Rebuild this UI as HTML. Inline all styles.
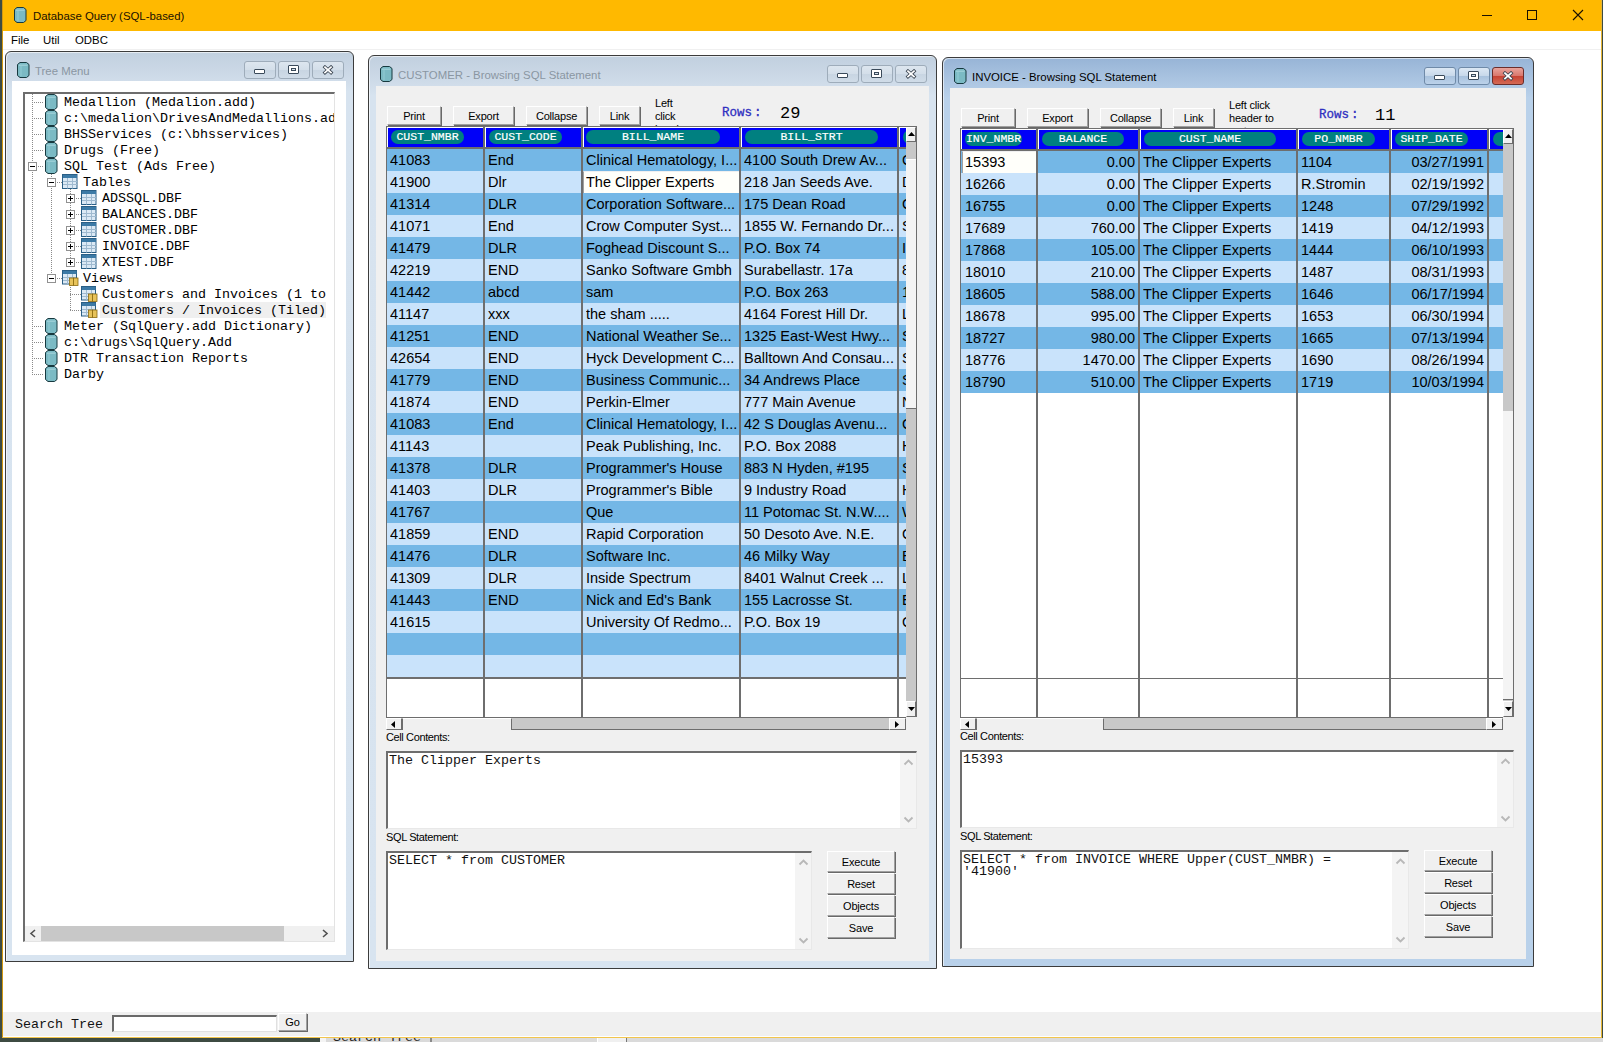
<!DOCTYPE html><html><head><meta charset="utf-8"><style>
*{margin:0;padding:0;box-sizing:border-box}
html,body{width:1603px;height:1042px;overflow:hidden;background:#3d4b42;position:relative;font-family:"Liberation Sans",sans-serif}
div,svg{position:absolute}
.t{white-space:pre;line-height:16px}
.m{font-family:"Liberation Mono",monospace;white-space:pre}
.btn{background:#f0f0f0;border-top:1px solid #fff;border-left:1px solid #fff;border-right:1px solid #a0a0a0;border-bottom:1px solid #a0a0a0;box-shadow:1px 1px 0 #696969;font-size:11px;letter-spacing:-0.2px;text-align:center;line-height:17px;color:#000}
.cap{border:1px solid #8d9cab;border-radius:3px;background:linear-gradient(#dfe8f1,#cfdbe7 50%,#c3d1df 51%,#cbd8e5)}
.g{font-size:14.5px;line-height:22px;color:#000;white-space:pre;overflow:hidden}
.pill{background:#008080;border-radius:7px;color:#fff;font-family:"Liberation Mono",monospace;font-size:11.5px;line-height:14px;-webkit-text-stroke:0.2px #fff;text-align:center;white-space:pre}
</style></head><body>
<div style="left:320px;top:1038px;width:1283px;height:4px;background:#dadada"></div>
<div style="left:320px;top:1038px;width:6px;height:4px;background:#f4f4f4"></div>
<div class="m" style="left:333px;top:1030px;font-size:13.33px;color:#222;line-height:16px">Search Tree</div>
<div style="left:430px;top:1038px;width:2px;height:4px;background:#8a8a8a"></div>
<div style="left:597px;top:1038px;width:30px;height:4px;background:#f0f0f0;border-left:1px solid #fff;border-right:1px solid #777"></div>
<div style="left:2px;top:0px;width:1600px;height:1038px;background:#fff;border-left:1px solid #d29812;border-right:1px solid #e6b534;border-bottom:1px solid #f2c54c"></div>
<div style="left:3px;top:0px;width:1598px;height:31px;background:#ffb900"></div>
<svg style="left:14px;top:7px" width="13" height="16" viewBox="0 0 13 16"><path d="M3 .5 H9.5 L12 2.5 V13.5 L9.5 15.5 H3 L.5 13.5 V2.5 Z" fill="#7bbac4" stroke="#17393f" stroke-width="1"/><path d="M2 3.2 H10.5" stroke="#a9d6dc" stroke-width="1"/><path d="M4 4 V14" stroke="#8fcad2" stroke-width="1.2"/></svg>
<div class="t" style="left:33px;top:8px;font-size:11.4px;color:#1a1000">Database Query (SQL-based)</div>
<div style="left:1482px;top:15px;width:10px;height:1px;background:#1a1000"></div>
<div style="left:1527px;top:10px;width:10px;height:10px;border:1px solid #1a1000"></div>
<svg style="left:1572px;top:9px" width="12" height="12" viewBox="0 0 12 12"><path d="M1 1L11 11M11 1L1 11" stroke="#1a1000" stroke-width="1.1"/></svg>
<div style="left:3px;top:31px;width:1598px;height:18px;background:#fff"></div>
<div class="t" style="left:11px;top:32px;font-size:11.4px;color:#000">File</div>
<div class="t" style="left:43px;top:32px;font-size:11.4px;color:#000">Util</div>
<div class="t" style="left:75px;top:32px;font-size:11.4px;color:#000">ODBC</div>
<div style="left:3px;top:49px;width:1598px;height:1px;background:#f0f0f0"></div>
<div style="left:3px;top:1012px;width:1598px;height:24px;background:#f0f0f0"></div>
<div class="m" style="left:15px;top:1017px;font-size:13.33px;color:#111;line-height:16px">Search Tree</div>
<div style="left:112px;top:1015px;width:165px;height:17px;background:#fff;border-top:2px solid #6a6a6a;border-left:2px solid #6a6a6a;border-bottom:1px solid #e0e0e0;border-right:1px solid #e0e0e0"></div>
<div class="btn" style="left:278px;top:1013px;width:29px;height:18px;">Go</div>
<div style="left:5px;top:51px;width:349px;height:911px;border:1px solid #3c3c3c;border-radius:6px 6px 0 0;background:linear-gradient(#c1d0df 0px,#cbd8e6 20px,#d7e3ef 40px,#d8e4f0);box-shadow:inset 1px 1px 0 rgba(255,255,255,.6)"></div><div style="left:12px;top:81px;width:334px;height:874px;background:#fff"></div><svg style="left:17px;top:62px" width="13" height="16" viewBox="0 0 13 16"><path d="M3 .5 H9.5 L12 2.5 V13.5 L9.5 15.5 H3 L.5 13.5 V2.5 Z" fill="#7bbac4" stroke="#17393f" stroke-width="1"/><path d="M2 3.2 H10.5" stroke="#a9d6dc" stroke-width="1"/><path d="M4 4 V14" stroke="#8fcad2" stroke-width="1.2"/></svg><div class="t" style="left:35px;top:63px;font-size:11.4px;color:#8a96a2">Tree Menu</div>
<div style="left:244px;top:61px;width:32px;height:18px;border:1px solid #9eacba;border-radius:3px;background:linear-gradient(#dde6ef,#d3dee9 50%,#c8d5e2 51%,#d0dce8)"><div style="left:9px;top:7px;width:11px;height:5px;background:#fff;border:1px solid #3a4a5a;border-radius:1px"></div></div><div style="left:278px;top:61px;width:32px;height:18px;border:1px solid #9eacba;border-radius:3px;background:linear-gradient(#dde6ef,#d3dee9 50%,#c8d5e2 51%,#d0dce8)"><div style="left:9px;top:3px;width:11px;height:9px;background:#fff;border:1px solid #3a4a5a;border-radius:1px"><div style="left:2px;top:2px;width:5px;height:3px;border:1px solid #3a4a5a;background:#d8e2ec"></div></div></div><div style="left:312px;top:61px;width:32px;height:18px;border:1px solid #9eacba;border-radius:3px;background:linear-gradient(#dde6ef,#d3dee9 50%,#c8d5e2 51%,#d0dce8)"><svg style="left:9px;top:3px" width="12" height="10" viewBox="0 0 12 10"><path d="M3 2.2 L9 7.6 M9 2.2 L3 7.6" stroke="#3a4450" stroke-width="3.4" stroke-linecap="square"/><path d="M3 2.2 L9 7.6 M9 2.2 L3 7.6" stroke="#fff" stroke-width="1.8" stroke-linecap="square"/></svg></div>
<div style="left:23px;top:92px;width:312px;height:850px;background:#fff;border-top:2px solid #6d6d6d;border-left:2px solid #6d6d6d;border-right:1px solid #e3e3e3;border-bottom:1px solid #e3e3e3"></div>
<div style="left:25px;top:94px;width:309px;height:832px;overflow:hidden"><div style="left:7px;top:0px;width:1px;height:280px;background:repeating-linear-gradient(#8a8a8a 0 1px,transparent 1px 2px)"></div><div style="left:26px;top:80px;width:1px;height:104px;background:repeating-linear-gradient(#8a8a8a 0 1px,transparent 1px 2px)"></div><div style="left:45px;top:95px;width:1px;height:73px;background:repeating-linear-gradient(#8a8a8a 0 1px,transparent 1px 2px)"></div><div style="left:45px;top:191px;width:1px;height:25px;background:repeating-linear-gradient(#8a8a8a 0 1px,transparent 1px 2px)"></div><div style="left:7px;top:8px;width:12px;height:1px;background:repeating-linear-gradient(90deg,#8a8a8a 0 1px,transparent 1px 2px)"></div><svg style="left:20px;top:0px" width="13" height="16" viewBox="0 0 13 16"><path d="M3 .5 H9.5 L12 2.5 V13.5 L9.5 15.5 H3 L.5 13.5 V2.5 Z" fill="#7bbac4" stroke="#17393f" stroke-width="1"/><path d="M2 3.2 H10.5" stroke="#a9d6dc" stroke-width="1"/><path d="M4 4 V14" stroke="#8fcad2" stroke-width="1.2"/></svg><div class="m" style="left:39px;top:1px;font-size:13.33px;color:#000;line-height:16px">Medallion (Medalion.add)</div><div style="left:7px;top:24px;width:12px;height:1px;background:repeating-linear-gradient(90deg,#8a8a8a 0 1px,transparent 1px 2px)"></div><svg style="left:20px;top:16px" width="13" height="16" viewBox="0 0 13 16"><path d="M3 .5 H9.5 L12 2.5 V13.5 L9.5 15.5 H3 L.5 13.5 V2.5 Z" fill="#7bbac4" stroke="#17393f" stroke-width="1"/><path d="M2 3.2 H10.5" stroke="#a9d6dc" stroke-width="1"/><path d="M4 4 V14" stroke="#8fcad2" stroke-width="1.2"/></svg><div class="m" style="left:39px;top:17px;font-size:13.33px;color:#000;line-height:16px">c:\medalion\DrivesAndMedallions.add</div><div style="left:7px;top:40px;width:12px;height:1px;background:repeating-linear-gradient(90deg,#8a8a8a 0 1px,transparent 1px 2px)"></div><svg style="left:20px;top:32px" width="13" height="16" viewBox="0 0 13 16"><path d="M3 .5 H9.5 L12 2.5 V13.5 L9.5 15.5 H3 L.5 13.5 V2.5 Z" fill="#7bbac4" stroke="#17393f" stroke-width="1"/><path d="M2 3.2 H10.5" stroke="#a9d6dc" stroke-width="1"/><path d="M4 4 V14" stroke="#8fcad2" stroke-width="1.2"/></svg><div class="m" style="left:39px;top:33px;font-size:13.33px;color:#000;line-height:16px">BHSServices (c:\bhsservices)</div><div style="left:7px;top:56px;width:12px;height:1px;background:repeating-linear-gradient(90deg,#8a8a8a 0 1px,transparent 1px 2px)"></div><svg style="left:20px;top:48px" width="13" height="16" viewBox="0 0 13 16"><path d="M3 .5 H9.5 L12 2.5 V13.5 L9.5 15.5 H3 L.5 13.5 V2.5 Z" fill="#7bbac4" stroke="#17393f" stroke-width="1"/><path d="M2 3.2 H10.5" stroke="#a9d6dc" stroke-width="1"/><path d="M4 4 V14" stroke="#8fcad2" stroke-width="1.2"/></svg><div class="m" style="left:39px;top:49px;font-size:13.33px;color:#000;line-height:16px">Drugs (Free)</div><div style="left:7px;top:72px;width:12px;height:1px;background:repeating-linear-gradient(90deg,#8a8a8a 0 1px,transparent 1px 2px)"></div><svg style="left:20px;top:64px" width="13" height="16" viewBox="0 0 13 16"><path d="M3 .5 H9.5 L12 2.5 V13.5 L9.5 15.5 H3 L.5 13.5 V2.5 Z" fill="#7bbac4" stroke="#17393f" stroke-width="1"/><path d="M2 3.2 H10.5" stroke="#a9d6dc" stroke-width="1"/><path d="M4 4 V14" stroke="#8fcad2" stroke-width="1.2"/></svg><div style="left:3px;top:68px;width:9px;height:9px;border:1px solid #919191;background:#fff"><div style="left:1px;top:3px;width:5px;height:1px;background:#000"></div></div><div class="m" style="left:39px;top:65px;font-size:13.33px;color:#000;line-height:16px">SQL Test (Ads Free)</div><div style="left:26px;top:88px;width:12px;height:1px;background:repeating-linear-gradient(90deg,#8a8a8a 0 1px,transparent 1px 2px)"></div><svg style="left:37px;top:80px" width="16" height="15" viewBox="0 0 16 15"><rect x=".5" y=".5" width="14.5" height="14" fill="#dbe9f5" stroke="#2a5f86"/><rect x="1" y="1" width="14" height="3" fill="#3c7aa6"/><path d="M1 7.5H15M1 10.5H15M5.5 4V14.5M10.5 4V14.5" stroke="#9fbad0" stroke-width="1"/></svg><div style="left:22px;top:84px;width:9px;height:9px;border:1px solid #919191;background:#fff"><div style="left:1px;top:3px;width:5px;height:1px;background:#000"></div></div><div class="m" style="left:58px;top:81px;font-size:13.33px;color:#000;line-height:16px">Tables</div><div style="left:45px;top:104px;width:12px;height:1px;background:repeating-linear-gradient(90deg,#8a8a8a 0 1px,transparent 1px 2px)"></div><svg style="left:56px;top:96px" width="16" height="15" viewBox="0 0 16 15"><rect x=".5" y=".5" width="14.5" height="14" fill="#dbe9f5" stroke="#2a5f86"/><rect x="1" y="1" width="14" height="3" fill="#3c7aa6"/><path d="M1 7.5H15M1 10.5H15M5.5 4V14.5M10.5 4V14.5" stroke="#9fbad0" stroke-width="1"/></svg><div style="left:41px;top:100px;width:9px;height:9px;border:1px solid #919191;background:#fff"><div style="left:1px;top:3px;width:5px;height:1px;background:#000"></div><div style="left:3px;top:1px;width:1px;height:5px;background:#000"></div></div><div class="m" style="left:77px;top:97px;font-size:13.33px;color:#000;line-height:16px">ADSSQL.DBF</div><div style="left:45px;top:120px;width:12px;height:1px;background:repeating-linear-gradient(90deg,#8a8a8a 0 1px,transparent 1px 2px)"></div><svg style="left:56px;top:112px" width="16" height="15" viewBox="0 0 16 15"><rect x=".5" y=".5" width="14.5" height="14" fill="#dbe9f5" stroke="#2a5f86"/><rect x="1" y="1" width="14" height="3" fill="#3c7aa6"/><path d="M1 7.5H15M1 10.5H15M5.5 4V14.5M10.5 4V14.5" stroke="#9fbad0" stroke-width="1"/></svg><div style="left:41px;top:116px;width:9px;height:9px;border:1px solid #919191;background:#fff"><div style="left:1px;top:3px;width:5px;height:1px;background:#000"></div><div style="left:3px;top:1px;width:1px;height:5px;background:#000"></div></div><div class="m" style="left:77px;top:113px;font-size:13.33px;color:#000;line-height:16px">BALANCES.DBF</div><div style="left:45px;top:136px;width:12px;height:1px;background:repeating-linear-gradient(90deg,#8a8a8a 0 1px,transparent 1px 2px)"></div><svg style="left:56px;top:128px" width="16" height="15" viewBox="0 0 16 15"><rect x=".5" y=".5" width="14.5" height="14" fill="#dbe9f5" stroke="#2a5f86"/><rect x="1" y="1" width="14" height="3" fill="#3c7aa6"/><path d="M1 7.5H15M1 10.5H15M5.5 4V14.5M10.5 4V14.5" stroke="#9fbad0" stroke-width="1"/></svg><div style="left:41px;top:132px;width:9px;height:9px;border:1px solid #919191;background:#fff"><div style="left:1px;top:3px;width:5px;height:1px;background:#000"></div><div style="left:3px;top:1px;width:1px;height:5px;background:#000"></div></div><div class="m" style="left:77px;top:129px;font-size:13.33px;color:#000;line-height:16px">CUSTOMER.DBF</div><div style="left:45px;top:152px;width:12px;height:1px;background:repeating-linear-gradient(90deg,#8a8a8a 0 1px,transparent 1px 2px)"></div><svg style="left:56px;top:144px" width="16" height="15" viewBox="0 0 16 15"><rect x=".5" y=".5" width="14.5" height="14" fill="#dbe9f5" stroke="#2a5f86"/><rect x="1" y="1" width="14" height="3" fill="#3c7aa6"/><path d="M1 7.5H15M1 10.5H15M5.5 4V14.5M10.5 4V14.5" stroke="#9fbad0" stroke-width="1"/></svg><div style="left:41px;top:148px;width:9px;height:9px;border:1px solid #919191;background:#fff"><div style="left:1px;top:3px;width:5px;height:1px;background:#000"></div><div style="left:3px;top:1px;width:1px;height:5px;background:#000"></div></div><div class="m" style="left:77px;top:145px;font-size:13.33px;color:#000;line-height:16px">INVOICE.DBF</div><div style="left:45px;top:168px;width:12px;height:1px;background:repeating-linear-gradient(90deg,#8a8a8a 0 1px,transparent 1px 2px)"></div><svg style="left:56px;top:160px" width="16" height="15" viewBox="0 0 16 15"><rect x=".5" y=".5" width="14.5" height="14" fill="#dbe9f5" stroke="#2a5f86"/><rect x="1" y="1" width="14" height="3" fill="#3c7aa6"/><path d="M1 7.5H15M1 10.5H15M5.5 4V14.5M10.5 4V14.5" stroke="#9fbad0" stroke-width="1"/></svg><div style="left:41px;top:164px;width:9px;height:9px;border:1px solid #919191;background:#fff"><div style="left:1px;top:3px;width:5px;height:1px;background:#000"></div><div style="left:3px;top:1px;width:1px;height:5px;background:#000"></div></div><div class="m" style="left:77px;top:161px;font-size:13.33px;color:#000;line-height:16px">XTEST.DBF</div><div style="left:26px;top:184px;width:12px;height:1px;background:repeating-linear-gradient(90deg,#8a8a8a 0 1px,transparent 1px 2px)"></div><svg style="left:37px;top:176px" width="17" height="16" viewBox="0 0 17 16"><rect x=".5" y=".5" width="14" height="13.5" fill="#dbe9f5" stroke="#2a5f86"/><rect x="1" y="1" width="13.5" height="3" fill="#3c7aa6"/><path d="M1 7.5H14M1 10.5H14M5.5 4V14M10.5 4V14" stroke="#9fbad0" stroke-width="1"/><rect x="7.5" y="8" width="4" height="7.5" fill="#e8c35a" stroke="#8a6a10" stroke-width=".8"/><rect x="11.5" y="8" width="4.5" height="7.5" fill="#e8c35a" stroke="#8a6a10" stroke-width=".8"/></svg><div style="left:22px;top:180px;width:9px;height:9px;border:1px solid #919191;background:#fff"><div style="left:1px;top:3px;width:5px;height:1px;background:#000"></div></div><div class="m" style="left:58px;top:177px;font-size:13.33px;color:#000;line-height:16px">Views</div><div style="left:45px;top:200px;width:12px;height:1px;background:repeating-linear-gradient(90deg,#8a8a8a 0 1px,transparent 1px 2px)"></div><svg style="left:56px;top:192px" width="17" height="16" viewBox="0 0 17 16"><rect x=".5" y=".5" width="14" height="13.5" fill="#dbe9f5" stroke="#2a5f86"/><rect x="1" y="1" width="13.5" height="3" fill="#3c7aa6"/><path d="M1 7.5H14M1 10.5H14M5.5 4V14M10.5 4V14" stroke="#9fbad0" stroke-width="1"/><rect x="7.5" y="8" width="4" height="7.5" fill="#e8c35a" stroke="#8a6a10" stroke-width=".8"/><rect x="11.5" y="8" width="4.5" height="7.5" fill="#e8c35a" stroke="#8a6a10" stroke-width=".8"/></svg><div class="m" style="left:77px;top:193px;font-size:13.33px;color:#000;line-height:16px">Customers and Invoices (1 to</div><div style="left:45px;top:216px;width:12px;height:1px;background:repeating-linear-gradient(90deg,#8a8a8a 0 1px,transparent 1px 2px)"></div><svg style="left:56px;top:208px" width="17" height="16" viewBox="0 0 17 16"><rect x=".5" y=".5" width="14" height="13.5" fill="#dbe9f5" stroke="#2a5f86"/><rect x="1" y="1" width="13.5" height="3" fill="#3c7aa6"/><path d="M1 7.5H14M1 10.5H14M5.5 4V14M10.5 4V14" stroke="#9fbad0" stroke-width="1"/><rect x="7.5" y="8" width="4" height="7.5" fill="#e8c35a" stroke="#8a6a10" stroke-width=".8"/><rect x="11.5" y="8" width="4.5" height="7.5" fill="#e8c35a" stroke="#8a6a10" stroke-width=".8"/></svg><div style="left:75px;top:208px;width:226px;height:16px;background:#efefef"></div><div class="m" style="left:77px;top:209px;font-size:13.33px;color:#000;line-height:16px">Customers / Invoices (Tiled)</div><div style="left:7px;top:232px;width:12px;height:1px;background:repeating-linear-gradient(90deg,#8a8a8a 0 1px,transparent 1px 2px)"></div><svg style="left:20px;top:224px" width="13" height="16" viewBox="0 0 13 16"><path d="M3 .5 H9.5 L12 2.5 V13.5 L9.5 15.5 H3 L.5 13.5 V2.5 Z" fill="#7bbac4" stroke="#17393f" stroke-width="1"/><path d="M2 3.2 H10.5" stroke="#a9d6dc" stroke-width="1"/><path d="M4 4 V14" stroke="#8fcad2" stroke-width="1.2"/></svg><div class="m" style="left:39px;top:225px;font-size:13.33px;color:#000;line-height:16px">Meter (SqlQuery.add Dictionary)</div><div style="left:7px;top:248px;width:12px;height:1px;background:repeating-linear-gradient(90deg,#8a8a8a 0 1px,transparent 1px 2px)"></div><svg style="left:20px;top:240px" width="13" height="16" viewBox="0 0 13 16"><path d="M3 .5 H9.5 L12 2.5 V13.5 L9.5 15.5 H3 L.5 13.5 V2.5 Z" fill="#7bbac4" stroke="#17393f" stroke-width="1"/><path d="M2 3.2 H10.5" stroke="#a9d6dc" stroke-width="1"/><path d="M4 4 V14" stroke="#8fcad2" stroke-width="1.2"/></svg><div class="m" style="left:39px;top:241px;font-size:13.33px;color:#000;line-height:16px">c:\drugs\SqlQuery.Add</div><div style="left:7px;top:264px;width:12px;height:1px;background:repeating-linear-gradient(90deg,#8a8a8a 0 1px,transparent 1px 2px)"></div><svg style="left:20px;top:256px" width="13" height="16" viewBox="0 0 13 16"><path d="M3 .5 H9.5 L12 2.5 V13.5 L9.5 15.5 H3 L.5 13.5 V2.5 Z" fill="#7bbac4" stroke="#17393f" stroke-width="1"/><path d="M2 3.2 H10.5" stroke="#a9d6dc" stroke-width="1"/><path d="M4 4 V14" stroke="#8fcad2" stroke-width="1.2"/></svg><div class="m" style="left:39px;top:257px;font-size:13.33px;color:#000;line-height:16px">DTR Transaction Reports</div><div style="left:7px;top:280px;width:12px;height:1px;background:repeating-linear-gradient(90deg,#8a8a8a 0 1px,transparent 1px 2px)"></div><svg style="left:20px;top:272px" width="13" height="16" viewBox="0 0 13 16"><path d="M3 .5 H9.5 L12 2.5 V13.5 L9.5 15.5 H3 L.5 13.5 V2.5 Z" fill="#7bbac4" stroke="#17393f" stroke-width="1"/><path d="M2 3.2 H10.5" stroke="#a9d6dc" stroke-width="1"/><path d="M4 4 V14" stroke="#8fcad2" stroke-width="1.2"/></svg><div class="m" style="left:39px;top:273px;font-size:13.33px;color:#000;line-height:16px">Darby</div></div>
<div style="left:25px;top:926px;width:309px;height:15px;background:#f0f0f0"></div>
<div style="left:41px;top:926px;width:243px;height:15px;background:#c8c8c8"></div>
<svg style="left:29px;top:929px" width="8" height="9" viewBox="0 0 8 9"><path d="M6 1L2 4.5L6 8" stroke="#505050" stroke-width="1.6" fill="none"/></svg>
<svg style="left:321px;top:929px" width="8" height="9" viewBox="0 0 8 9"><path d="M2 1L6 4.5L2 8" stroke="#505050" stroke-width="1.6" fill="none"/></svg>
<div style="left:368px;top:55px;width:569px;height:914px;border:1px solid #3c3c3c;border-radius:6px 6px 0 0;background:linear-gradient(#c1d0df 0px,#cbd8e6 20px,#d7e3ef 40px,#d8e4f0);box-shadow:inset 1px 1px 0 rgba(255,255,255,.6)"></div><div style="left:376px;top:86px;width:553px;height:875px;background:#f0f0f0"></div><svg style="left:380px;top:66px" width="13" height="16" viewBox="0 0 13 16"><path d="M3 .5 H9.5 L12 2.5 V13.5 L9.5 15.5 H3 L.5 13.5 V2.5 Z" fill="#7bbac4" stroke="#17393f" stroke-width="1"/><path d="M2 3.2 H10.5" stroke="#a9d6dc" stroke-width="1"/><path d="M4 4 V14" stroke="#8fcad2" stroke-width="1.2"/></svg><div class="t" style="left:398px;top:67px;font-size:11.4px;color:#8a96a2">CUSTOMER - Browsing SQL Statement</div><div style="left:827px;top:65px;width:32px;height:18px;border:1px solid #9eacba;border-radius:3px;background:linear-gradient(#dde6ef,#d3dee9 50%,#c8d5e2 51%,#d0dce8)"><div style="left:9px;top:7px;width:11px;height:5px;background:#fff;border:1px solid #3a4a5a;border-radius:1px"></div></div><div style="left:861px;top:65px;width:32px;height:18px;border:1px solid #9eacba;border-radius:3px;background:linear-gradient(#dde6ef,#d3dee9 50%,#c8d5e2 51%,#d0dce8)"><div style="left:9px;top:3px;width:11px;height:9px;background:#fff;border:1px solid #3a4a5a;border-radius:1px"><div style="left:2px;top:2px;width:5px;height:3px;border:1px solid #3a4a5a;background:#d8e2ec"></div></div></div><div style="left:895px;top:65px;width:32px;height:18px;border:1px solid #9eacba;border-radius:3px;background:linear-gradient(#dde6ef,#d3dee9 50%,#c8d5e2 51%,#d0dce8)"><svg style="left:9px;top:3px" width="12" height="10" viewBox="0 0 12 10"><path d="M3 2.2 L9 7.6 M9 2.2 L3 7.6" stroke="#3a4450" stroke-width="3.4" stroke-linecap="square"/><path d="M3 2.2 L9 7.6 M9 2.2 L3 7.6" stroke="#fff" stroke-width="1.8" stroke-linecap="square"/></svg></div><div class="btn" style="left:387px;top:106px;width:54px;height:19px;line-height:18px">Print</div><div class="btn" style="left:453px;top:106px;width:61px;height:19px;line-height:18px">Export</div><div class="btn" style="left:526px;top:106px;width:61px;height:19px;line-height:18px">Collapse</div><div class="btn" style="left:599px;top:106px;width:41px;height:19px;line-height:18px">Link</div><div style="left:655px;top:96px;width:50px;height:30px;overflow:hidden"><div class="t" style="left:0px;top:1px;font-size:11px;line-height:13px;color:#000;letter-spacing:-0.2px">Left</div><div class="t" style="left:0px;top:14px;font-size:11px;line-height:13px;color:#000;letter-spacing:-0.2px">click</div><div class="t" style="left:0px;top:27px;font-size:11px;line-height:13px;color:#000;letter-spacing:-0.2px">header</div><div class="t" style="left:0px;top:40px;font-size:11px;line-height:13px;color:#000;letter-spacing:-0.2px">to sort</div></div><div class="m" style="left:722px;top:105px;font-size:12.5px;line-height:16px;color:#2f2fc0;-webkit-text-stroke:0.3px #2f2fc0">Rows</div><div class="m" style="left:754px;top:105px;font-size:12.5px;line-height:16px;color:#2f2fc0;-webkit-text-stroke:0.3px #2f2fc0">:</div><div class="m" style="left:780px;top:104px;font-size:17px;line-height:20px;color:#000">29</div><div style="left:386px;top:126px;width:520px;height:591px;overflow:hidden;background:#fff"><div style="left:0px;top:0px;width:520px;height:1px;background:#6e6e6e"></div><div style="left:0px;top:0px;width:1px;height:591px;background:#6e6e6e"></div><div style="left:1px;top:1px;width:520px;height:20px;background:#0000f8;border-top:1px solid #fff;border-left:1px solid #fff"></div><div style="left:1px;top:21px;width:520px;height:2px;background:#6e6e6e"></div><div style="left:1px;top:23px;width:520px;height:22px;background:#74b7e6"></div><div style="left:1px;top:45px;width:520px;height:22px;background:#c9e3fb"></div><div style="left:1px;top:67px;width:520px;height:22px;background:#74b7e6"></div><div style="left:1px;top:89px;width:520px;height:22px;background:#c9e3fb"></div><div style="left:1px;top:111px;width:520px;height:22px;background:#74b7e6"></div><div style="left:1px;top:133px;width:520px;height:22px;background:#c9e3fb"></div><div style="left:1px;top:155px;width:520px;height:22px;background:#74b7e6"></div><div style="left:1px;top:177px;width:520px;height:22px;background:#c9e3fb"></div><div style="left:1px;top:199px;width:520px;height:22px;background:#74b7e6"></div><div style="left:1px;top:221px;width:520px;height:22px;background:#c9e3fb"></div><div style="left:1px;top:243px;width:520px;height:22px;background:#74b7e6"></div><div style="left:1px;top:265px;width:520px;height:22px;background:#c9e3fb"></div><div style="left:1px;top:287px;width:520px;height:22px;background:#74b7e6"></div><div style="left:1px;top:309px;width:520px;height:22px;background:#c9e3fb"></div><div style="left:1px;top:331px;width:520px;height:22px;background:#74b7e6"></div><div style="left:1px;top:353px;width:520px;height:22px;background:#c9e3fb"></div><div style="left:1px;top:375px;width:520px;height:22px;background:#74b7e6"></div><div style="left:1px;top:397px;width:520px;height:22px;background:#c9e3fb"></div><div style="left:1px;top:419px;width:520px;height:22px;background:#74b7e6"></div><div style="left:1px;top:441px;width:520px;height:22px;background:#c9e3fb"></div><div style="left:1px;top:463px;width:520px;height:22px;background:#74b7e6"></div><div style="left:1px;top:485px;width:520px;height:22px;background:#c9e3fb"></div><div style="left:1px;top:507px;width:520px;height:22px;background:#74b7e6"></div><div style="left:1px;top:529px;width:520px;height:22px;background:#c9e3fb"></div><div style="left:1px;top:551px;width:520px;height:2px;background:#6e6e6e"></div><div style="left:1px;top:552px;width:520px;height:1px;background:#6e6e6e"></div><div class="pill" style="left:5px;top:4px;width:73px;height:14px;">CUST_NMBR</div><div style="left:97px;top:0px;width:2px;height:591px;background:#6e6e6e"></div><div style="left:99px;top:1px;width:1px;height:20px;background:#fff"></div><div class="pill" style="left:103px;top:4px;width:73px;height:14px;">CUST_CODE</div><div style="left:195px;top:0px;width:2px;height:591px;background:#6e6e6e"></div><div style="left:197px;top:1px;width:1px;height:20px;background:#fff"></div><div class="pill" style="left:200px;top:4px;width:134px;height:14px;">BILL_NAME</div><div style="left:353px;top:0px;width:2px;height:591px;background:#6e6e6e"></div><div style="left:355px;top:1px;width:1px;height:20px;background:#fff"></div><div class="pill" style="left:359px;top:4px;width:133px;height:14px;">BILL_STRT</div><div style="left:511px;top:0px;width:2px;height:591px;background:#6e6e6e"></div><div style="left:513px;top:1px;width:1px;height:20px;background:#fff"></div><div class="pill" style="left:517px;top:4px;width:137px;height:14px;">BILL_CITY</div><div style="left:674px;top:0px;width:2px;height:591px;background:#6e6e6e"></div><div style="left:676px;top:1px;width:1px;height:20px;background:#fff"></div><div class="g" style="left:4px;top:23px;width:93px;height:22px">41083</div><div class="g" style="left:102px;top:23px;width:93px;height:22px">End</div><div class="g" style="left:200px;top:23px;width:153px;height:22px">Clinical Hematology, I...</div><div class="g" style="left:358px;top:23px;width:153px;height:22px">4100 South Drew Av...</div><div class="g" style="left:516px;top:23px;width:158px;height:22px">C</div><div class="g" style="left:4px;top:45px;width:93px;height:22px">41900</div><div class="g" style="left:102px;top:45px;width:93px;height:22px">Dlr</div><div style="left:197px;top:45px;width:156px;height:22px;background:#fffffa;border-top:1px solid #f0f0f0;border-left:1px solid #a0a0a0"></div><div class="g" style="left:200px;top:45px;width:153px;height:22px">The Clipper Experts</div><div class="g" style="left:358px;top:45px;width:153px;height:22px">218 Jan Seeds Ave.</div><div class="g" style="left:516px;top:45px;width:158px;height:22px">D</div><div class="g" style="left:4px;top:67px;width:93px;height:22px">41314</div><div class="g" style="left:102px;top:67px;width:93px;height:22px">DLR</div><div class="g" style="left:200px;top:67px;width:153px;height:22px">Corporation Software...</div><div class="g" style="left:358px;top:67px;width:153px;height:22px">175 Dean Road</div><div class="g" style="left:516px;top:67px;width:158px;height:22px">C</div><div class="g" style="left:4px;top:89px;width:93px;height:22px">41071</div><div class="g" style="left:102px;top:89px;width:93px;height:22px">End</div><div class="g" style="left:200px;top:89px;width:153px;height:22px">Crow Computer Syst...</div><div class="g" style="left:358px;top:89px;width:153px;height:22px">1855 W. Fernando Dr...</div><div class="g" style="left:516px;top:89px;width:158px;height:22px">S</div><div class="g" style="left:4px;top:111px;width:93px;height:22px">41479</div><div class="g" style="left:102px;top:111px;width:93px;height:22px">DLR</div><div class="g" style="left:200px;top:111px;width:153px;height:22px">Foghead Discount S...</div><div class="g" style="left:358px;top:111px;width:153px;height:22px">P.O. Box 74</div><div class="g" style="left:516px;top:111px;width:158px;height:22px">I</div><div class="g" style="left:4px;top:133px;width:93px;height:22px">42219</div><div class="g" style="left:102px;top:133px;width:93px;height:22px">END</div><div class="g" style="left:200px;top:133px;width:153px;height:22px">Sanko Software Gmbh</div><div class="g" style="left:358px;top:133px;width:153px;height:22px">Surabellastr. 17a</div><div class="g" style="left:516px;top:133px;width:158px;height:22px">8</div><div class="g" style="left:4px;top:155px;width:93px;height:22px">41442</div><div class="g" style="left:102px;top:155px;width:93px;height:22px">abcd</div><div class="g" style="left:200px;top:155px;width:153px;height:22px">sam</div><div class="g" style="left:358px;top:155px;width:153px;height:22px">P.O. Box 263</div><div class="g" style="left:516px;top:155px;width:158px;height:22px">1</div><div class="g" style="left:4px;top:177px;width:93px;height:22px">41147</div><div class="g" style="left:102px;top:177px;width:93px;height:22px">xxx</div><div class="g" style="left:200px;top:177px;width:153px;height:22px">the sham .....</div><div class="g" style="left:358px;top:177px;width:153px;height:22px">4164 Forest Hill Dr.</div><div class="g" style="left:516px;top:177px;width:158px;height:22px">L</div><div class="g" style="left:4px;top:199px;width:93px;height:22px">41251</div><div class="g" style="left:102px;top:199px;width:93px;height:22px">END</div><div class="g" style="left:200px;top:199px;width:153px;height:22px">National Weather Se...</div><div class="g" style="left:358px;top:199px;width:153px;height:22px">1325 East-West Hwy...</div><div class="g" style="left:516px;top:199px;width:158px;height:22px">S</div><div class="g" style="left:4px;top:221px;width:93px;height:22px">42654</div><div class="g" style="left:102px;top:221px;width:93px;height:22px">END</div><div class="g" style="left:200px;top:221px;width:153px;height:22px">Hyck Development C...</div><div class="g" style="left:358px;top:221px;width:153px;height:22px">Balltown And Consau...</div><div class="g" style="left:516px;top:221px;width:158px;height:22px">S</div><div class="g" style="left:4px;top:243px;width:93px;height:22px">41779</div><div class="g" style="left:102px;top:243px;width:93px;height:22px">END</div><div class="g" style="left:200px;top:243px;width:153px;height:22px">Business Communic...</div><div class="g" style="left:358px;top:243px;width:153px;height:22px">34 Andrews Place</div><div class="g" style="left:516px;top:243px;width:158px;height:22px">S</div><div class="g" style="left:4px;top:265px;width:93px;height:22px">41874</div><div class="g" style="left:102px;top:265px;width:93px;height:22px">END</div><div class="g" style="left:200px;top:265px;width:153px;height:22px">Perkin-Elmer</div><div class="g" style="left:358px;top:265px;width:153px;height:22px">777 Main Avenue</div><div class="g" style="left:516px;top:265px;width:158px;height:22px">N</div><div class="g" style="left:4px;top:287px;width:93px;height:22px">41083</div><div class="g" style="left:102px;top:287px;width:93px;height:22px">End</div><div class="g" style="left:200px;top:287px;width:153px;height:22px">Clinical Hematology, I...</div><div class="g" style="left:358px;top:287px;width:153px;height:22px">42 S Douglas Avenu...</div><div class="g" style="left:516px;top:287px;width:158px;height:22px">C</div><div class="g" style="left:4px;top:309px;width:93px;height:22px">41143</div><div class="g" style="left:200px;top:309px;width:153px;height:22px">Peak Publishing, Inc.</div><div class="g" style="left:358px;top:309px;width:153px;height:22px">P.O. Box 2088</div><div class="g" style="left:516px;top:309px;width:158px;height:22px">H</div><div class="g" style="left:4px;top:331px;width:93px;height:22px">41378</div><div class="g" style="left:102px;top:331px;width:93px;height:22px">DLR</div><div class="g" style="left:200px;top:331px;width:153px;height:22px">Programmer's House</div><div class="g" style="left:358px;top:331px;width:153px;height:22px">883 N Hyden, #195</div><div class="g" style="left:516px;top:331px;width:158px;height:22px">S</div><div class="g" style="left:4px;top:353px;width:93px;height:22px">41403</div><div class="g" style="left:102px;top:353px;width:93px;height:22px">DLR</div><div class="g" style="left:200px;top:353px;width:153px;height:22px">Programmer's Bible</div><div class="g" style="left:358px;top:353px;width:153px;height:22px">9 Industry Road</div><div class="g" style="left:516px;top:353px;width:158px;height:22px">H</div><div class="g" style="left:4px;top:375px;width:93px;height:22px">41767</div><div class="g" style="left:200px;top:375px;width:153px;height:22px">Que</div><div class="g" style="left:358px;top:375px;width:153px;height:22px">11 Potomac St. N.W....</div><div class="g" style="left:516px;top:375px;width:158px;height:22px">W</div><div class="g" style="left:4px;top:397px;width:93px;height:22px">41859</div><div class="g" style="left:102px;top:397px;width:93px;height:22px">END</div><div class="g" style="left:200px;top:397px;width:153px;height:22px">Rapid Corporation</div><div class="g" style="left:358px;top:397px;width:153px;height:22px">50 Desoto Ave. N.E.</div><div class="g" style="left:516px;top:397px;width:158px;height:22px">C</div><div class="g" style="left:4px;top:419px;width:93px;height:22px">41476</div><div class="g" style="left:102px;top:419px;width:93px;height:22px">DLR</div><div class="g" style="left:200px;top:419px;width:153px;height:22px">Software Inc.</div><div class="g" style="left:358px;top:419px;width:153px;height:22px">46 Milky Way</div><div class="g" style="left:516px;top:419px;width:158px;height:22px">B</div><div class="g" style="left:4px;top:441px;width:93px;height:22px">41309</div><div class="g" style="left:102px;top:441px;width:93px;height:22px">DLR</div><div class="g" style="left:200px;top:441px;width:153px;height:22px">Inside Spectrum</div><div class="g" style="left:358px;top:441px;width:153px;height:22px">8401 Walnut Creek ...</div><div class="g" style="left:516px;top:441px;width:158px;height:22px">L</div><div class="g" style="left:4px;top:463px;width:93px;height:22px">41443</div><div class="g" style="left:102px;top:463px;width:93px;height:22px">END</div><div class="g" style="left:200px;top:463px;width:153px;height:22px">Nick and Ed's Bank</div><div class="g" style="left:358px;top:463px;width:153px;height:22px">155 Lacrosse St.</div><div class="g" style="left:516px;top:463px;width:158px;height:22px">E</div><div class="g" style="left:4px;top:485px;width:93px;height:22px">41615</div><div class="g" style="left:200px;top:485px;width:153px;height:22px">University Of Redmo...</div><div class="g" style="left:358px;top:485px;width:153px;height:22px">P.O. Box 19</div><div class="g" style="left:516px;top:485px;width:158px;height:22px">C</div></div><div style="left:906px;top:126px;width:11px;height:591px;background:#c8c8c8;border-right:1px solid #6d6d6d;border-top:1px solid #6d6d6d"></div><div style="left:906px;top:127px;width:10px;height:15px;background:#f0f0f0;border-top:1px solid #fff;border-left:1px solid #fff;border-right:1px solid #6d6d6d;border-bottom:1px solid #6d6d6d"></div><svg style="left:908px;top:132px" width="7" height="4" viewBox="0 0 7 4"><path d="M0 4L3.5 0L7 4Z" fill="#000"/></svg><div style="left:906px;top:159px;width:10px;height:250px;background:#f4f4f4;border-bottom:1px solid #6d6d6d;border-top:1px solid #fff"></div><div style="left:906px;top:701px;width:10px;height:16px;background:#f0f0f0;border-top:1px solid #fff;border-left:1px solid #fff;border-right:1px solid #6d6d6d;border-bottom:1px solid #6d6d6d"></div><svg style="left:908px;top:707px" width="7" height="4" viewBox="0 0 7 4"><path d="M0 0L7 0L3.5 4Z" fill="#000"/></svg><div style="left:386px;top:717px;width:520px;height:13px;background:#c8c8c8;border-top:1px solid #6d6d6d;border-bottom:1px solid #6d6d6d"></div><div style="left:386px;top:718px;width:16px;height:12px;background:#f0f0f0;border-top:1px solid #fff;border-left:1px solid #fff;border-right:1px solid #6d6d6d;border-bottom:1px solid #6d6d6d"></div><svg style="left:391px;top:721px" width="4" height="7" viewBox="0 0 4 7"><path d="M4 0L4 7L0 3.5Z" fill="#000"/></svg><div style="left:402px;top:718px;width:110px;height:12px;background:#f0f0f0;border-left:1px solid #6d6d6d;border-right:1px solid #6d6d6d;border-top:1px solid #fff"></div><div style="left:889px;top:718px;width:17px;height:12px;background:#f0f0f0;border-top:1px solid #fff;border-left:1px solid #fff;border-right:1px solid #6d6d6d;border-bottom:1px solid #6d6d6d"></div><svg style="left:895px;top:721px" width="4" height="7" viewBox="0 0 4 7"><path d="M0 0L0 7L4 3.5Z" fill="#000"/></svg><div style="left:906px;top:717px;width:11px;height:13px;background:#f0f0f0"></div><div class="t" style="left:386px;top:731px;font-size:11px;line-height:13px;color:#000;letter-spacing:-0.38px">Cell Contents:</div><div style="left:386px;top:751px;width:531px;height:78px;background:#fff;border-top:2px solid #6d6d6d;border-left:2px solid #6d6d6d;border-right:1px solid #e8e8e8;border-bottom:1px solid #e8e8e8"></div><div style="left:900px;top:753px;width:16px;height:75px;background:#f4f4f4"></div><svg style="left:903px;top:759px" width="11" height="7" viewBox="0 0 11 7"><path d="M1.5 5.5L5.5 1.5L9.5 5.5" stroke="#b8b8b8" stroke-width="1.8" fill="none"/></svg><svg style="left:903px;top:816px" width="11" height="7" viewBox="0 0 11 7"><path d="M1.5 1.5L5.5 5.5L9.5 1.5" stroke="#b8b8b8" stroke-width="1.8" fill="none"/></svg><div class="m" style="left:389px;top:755px;font-size:13.33px;line-height:12px;color:#111">The Clipper Experts</div><div class="t" style="left:386px;top:831px;font-size:11px;line-height:13px;color:#000;letter-spacing:-0.38px">SQL Statement:</div><div style="left:386px;top:851px;width:426px;height:99px;background:#fff;border-top:2px solid #6d6d6d;border-left:2px solid #6d6d6d;border-right:1px solid #e8e8e8;border-bottom:1px solid #e8e8e8"></div><div style="left:795px;top:853px;width:16px;height:96px;background:#f4f4f4"></div><svg style="left:798px;top:859px" width="11" height="7" viewBox="0 0 11 7"><path d="M1.5 5.5L5.5 1.5L9.5 5.5" stroke="#b8b8b8" stroke-width="1.8" fill="none"/></svg><svg style="left:798px;top:937px" width="11" height="7" viewBox="0 0 11 7"><path d="M1.5 1.5L5.5 5.5L9.5 1.5" stroke="#b8b8b8" stroke-width="1.8" fill="none"/></svg><div class="m" style="left:389px;top:855px;font-size:13.33px;line-height:12px;color:#111">SELECT * from CUSTOMER</div><div class="btn" style="left:827px;top:851px;width:68px;height:21px;line-height:20px">Execute</div><div class="btn" style="left:827px;top:873px;width:68px;height:21px;line-height:20px">Reset</div><div class="btn" style="left:827px;top:895px;width:68px;height:21px;line-height:20px">Objects</div><div class="btn" style="left:827px;top:917px;width:68px;height:21px;line-height:20px">Save</div>
<div style="left:942px;top:57px;width:592px;height:910px;border:1px solid #3c3c3c;border-radius:6px 6px 0 0;background:linear-gradient(#97b4d6 0px,#a9c3e0 20px,#b9d1ea 40px,#b9d1ea);box-shadow:inset 1px 1px 0 rgba(255,255,255,.6)"></div><div style="left:950px;top:88px;width:576px;height:871px;background:#f0f0f0"></div><svg style="left:954px;top:68px" width="13" height="16" viewBox="0 0 13 16"><path d="M3 .5 H9.5 L12 2.5 V13.5 L9.5 15.5 H3 L.5 13.5 V2.5 Z" fill="#7bbac4" stroke="#17393f" stroke-width="1"/><path d="M2 3.2 H10.5" stroke="#a9d6dc" stroke-width="1"/><path d="M4 4 V14" stroke="#8fcad2" stroke-width="1.2"/></svg><div class="t" style="left:972px;top:69px;font-size:11.4px;color:#000">INVOICE - Browsing SQL Statement</div><div style="left:1424px;top:67px;width:32px;height:18px;border:1px solid #6f8aa8;border-radius:3px;background:linear-gradient(#dce8f4,#c7d8ea 50%,#a9c2dd 51%,#bcd2ea)"><div style="left:9px;top:7px;width:11px;height:5px;background:#fff;border:1px solid #3a4a5a;border-radius:1px"></div></div><div style="left:1458px;top:67px;width:32px;height:18px;border:1px solid #6f8aa8;border-radius:3px;background:linear-gradient(#dce8f4,#c7d8ea 50%,#a9c2dd 51%,#bcd2ea)"><div style="left:9px;top:3px;width:11px;height:9px;background:#fff;border:1px solid #3a4a5a;border-radius:1px"><div style="left:2px;top:2px;width:5px;height:3px;border:1px solid #3a4a5a;background:#d8e2ec"></div></div></div><div style="left:1492px;top:67px;width:32px;height:18px;border:1px solid #6b2d2a;border-radius:3px;background:linear-gradient(#e8a39b,#d9766b 50%,#c74233 51%,#d46a55)"><svg style="left:9px;top:3px" width="12" height="10" viewBox="0 0 12 10"><path d="M3 2.2 L9 7.6 M9 2.2 L3 7.6" stroke="#3a4450" stroke-width="3.4" stroke-linecap="square"/><path d="M3 2.2 L9 7.6 M9 2.2 L3 7.6" stroke="#fff" stroke-width="1.8" stroke-linecap="square"/></svg></div><div class="btn" style="left:961px;top:108px;width:54px;height:19px;line-height:18px">Print</div><div class="btn" style="left:1027px;top:108px;width:61px;height:19px;line-height:18px">Export</div><div class="btn" style="left:1100px;top:108px;width:61px;height:19px;line-height:18px">Collapse</div><div class="btn" style="left:1173px;top:108px;width:41px;height:19px;line-height:18px">Link</div><div style="left:1229px;top:98px;width:80px;height:30px;overflow:hidden"><div class="t" style="left:0px;top:1px;font-size:11px;line-height:13px;color:#000;letter-spacing:-0.2px">Left click</div><div class="t" style="left:0px;top:14px;font-size:11px;line-height:13px;color:#000;letter-spacing:-0.2px">header to</div><div class="t" style="left:0px;top:27px;font-size:11px;line-height:13px;color:#000;letter-spacing:-0.2px">sort</div></div><div class="m" style="left:1319px;top:107px;font-size:12.5px;line-height:16px;color:#2f2fc0;-webkit-text-stroke:0.3px #2f2fc0">Rows</div><div class="m" style="left:1351px;top:107px;font-size:12.5px;line-height:16px;color:#2f2fc0;-webkit-text-stroke:0.3px #2f2fc0">:</div><div class="m" style="left:1375px;top:106px;font-size:17px;line-height:20px;color:#000">11</div><div style="left:960px;top:128px;width:543px;height:589px;overflow:hidden;background:#fff"><div style="left:0px;top:0px;width:543px;height:1px;background:#6e6e6e"></div><div style="left:0px;top:0px;width:1px;height:589px;background:#6e6e6e"></div><div style="left:1px;top:1px;width:543px;height:20px;background:#0000f8;border-top:1px solid #fff;border-left:1px solid #fff"></div><div style="left:1px;top:21px;width:543px;height:2px;background:#6e6e6e"></div><div style="left:1px;top:23px;width:543px;height:22px;background:#74b7e6"></div><div style="left:1px;top:45px;width:543px;height:22px;background:#c9e3fb"></div><div style="left:1px;top:67px;width:543px;height:22px;background:#74b7e6"></div><div style="left:1px;top:89px;width:543px;height:22px;background:#c9e3fb"></div><div style="left:1px;top:111px;width:543px;height:22px;background:#74b7e6"></div><div style="left:1px;top:133px;width:543px;height:22px;background:#c9e3fb"></div><div style="left:1px;top:155px;width:543px;height:22px;background:#74b7e6"></div><div style="left:1px;top:177px;width:543px;height:22px;background:#c9e3fb"></div><div style="left:1px;top:199px;width:543px;height:22px;background:#74b7e6"></div><div style="left:1px;top:221px;width:543px;height:22px;background:#c9e3fb"></div><div style="left:1px;top:243px;width:543px;height:22px;background:#74b7e6"></div><div style="left:1px;top:550px;width:543px;height:1px;background:#6e6e6e"></div><div class="pill" style="left:5px;top:4px;width:57px;height:14px;">INV_NMBR</div><div style="left:76px;top:0px;width:2px;height:589px;background:#6e6e6e"></div><div style="left:78px;top:1px;width:1px;height:20px;background:#fff"></div><div class="pill" style="left:82px;top:4px;width:82px;height:14px;">BALANCE</div><div style="left:178px;top:0px;width:2px;height:589px;background:#6e6e6e"></div><div style="left:180px;top:1px;width:1px;height:20px;background:#fff"></div><div class="pill" style="left:184px;top:4px;width:132px;height:14px;">CUST_NAME</div><div style="left:336px;top:0px;width:2px;height:589px;background:#6e6e6e"></div><div style="left:338px;top:1px;width:1px;height:20px;background:#fff"></div><div class="pill" style="left:342px;top:4px;width:73px;height:14px;">PO_NMBR</div><div style="left:429px;top:0px;width:2px;height:589px;background:#6e6e6e"></div><div style="left:431px;top:1px;width:1px;height:20px;background:#fff"></div><div class="pill" style="left:435px;top:4px;width:73px;height:14px;">SHIP_DATE</div><div style="left:527px;top:0px;width:2px;height:589px;background:#6e6e6e"></div><div style="left:529px;top:1px;width:1px;height:20px;background:#fff"></div><div class="pill" style="left:533px;top:4px;width:87px;height:14px;">CUST_NMBR</div><div style="left:640px;top:0px;width:2px;height:589px;background:#6e6e6e"></div><div style="left:642px;top:1px;width:1px;height:20px;background:#fff"></div><div style="left:2px;top:23px;width:74px;height:22px;background:#fffffa;border-top:1px solid #f0f0f0;border-left:1px solid #a0a0a0"></div><div class="g" style="left:5px;top:23px;width:71px;height:22px">15393</div><div class="g" style="left:80px;top:23px;width:95px;height:22px;text-align:right">0.00</div><div class="g" style="left:183px;top:23px;width:153px;height:22px">The Clipper Experts</div><div class="g" style="left:341px;top:23px;width:88px;height:22px">1104</div><div class="g" style="left:431px;top:23px;width:93px;height:22px;text-align:right">03/27/1991</div><div class="g" style="left:5px;top:45px;width:71px;height:22px">16266</div><div class="g" style="left:80px;top:45px;width:95px;height:22px;text-align:right">0.00</div><div class="g" style="left:183px;top:45px;width:153px;height:22px">The Clipper Experts</div><div class="g" style="left:341px;top:45px;width:88px;height:22px">R.Stromin</div><div class="g" style="left:431px;top:45px;width:93px;height:22px;text-align:right">02/19/1992</div><div class="g" style="left:5px;top:67px;width:71px;height:22px">16755</div><div class="g" style="left:80px;top:67px;width:95px;height:22px;text-align:right">0.00</div><div class="g" style="left:183px;top:67px;width:153px;height:22px">The Clipper Experts</div><div class="g" style="left:341px;top:67px;width:88px;height:22px">1248</div><div class="g" style="left:431px;top:67px;width:93px;height:22px;text-align:right">07/29/1992</div><div class="g" style="left:5px;top:89px;width:71px;height:22px">17689</div><div class="g" style="left:80px;top:89px;width:95px;height:22px;text-align:right">760.00</div><div class="g" style="left:183px;top:89px;width:153px;height:22px">The Clipper Experts</div><div class="g" style="left:341px;top:89px;width:88px;height:22px">1419</div><div class="g" style="left:431px;top:89px;width:93px;height:22px;text-align:right">04/12/1993</div><div class="g" style="left:5px;top:111px;width:71px;height:22px">17868</div><div class="g" style="left:80px;top:111px;width:95px;height:22px;text-align:right">105.00</div><div class="g" style="left:183px;top:111px;width:153px;height:22px">The Clipper Experts</div><div class="g" style="left:341px;top:111px;width:88px;height:22px">1444</div><div class="g" style="left:431px;top:111px;width:93px;height:22px;text-align:right">06/10/1993</div><div class="g" style="left:5px;top:133px;width:71px;height:22px">18010</div><div class="g" style="left:80px;top:133px;width:95px;height:22px;text-align:right">210.00</div><div class="g" style="left:183px;top:133px;width:153px;height:22px">The Clipper Experts</div><div class="g" style="left:341px;top:133px;width:88px;height:22px">1487</div><div class="g" style="left:431px;top:133px;width:93px;height:22px;text-align:right">08/31/1993</div><div class="g" style="left:5px;top:155px;width:71px;height:22px">18605</div><div class="g" style="left:80px;top:155px;width:95px;height:22px;text-align:right">588.00</div><div class="g" style="left:183px;top:155px;width:153px;height:22px">The Clipper Experts</div><div class="g" style="left:341px;top:155px;width:88px;height:22px">1646</div><div class="g" style="left:431px;top:155px;width:93px;height:22px;text-align:right">06/17/1994</div><div class="g" style="left:5px;top:177px;width:71px;height:22px">18678</div><div class="g" style="left:80px;top:177px;width:95px;height:22px;text-align:right">995.00</div><div class="g" style="left:183px;top:177px;width:153px;height:22px">The Clipper Experts</div><div class="g" style="left:341px;top:177px;width:88px;height:22px">1653</div><div class="g" style="left:431px;top:177px;width:93px;height:22px;text-align:right">06/30/1994</div><div class="g" style="left:5px;top:199px;width:71px;height:22px">18727</div><div class="g" style="left:80px;top:199px;width:95px;height:22px;text-align:right">980.00</div><div class="g" style="left:183px;top:199px;width:153px;height:22px">The Clipper Experts</div><div class="g" style="left:341px;top:199px;width:88px;height:22px">1665</div><div class="g" style="left:431px;top:199px;width:93px;height:22px;text-align:right">07/13/1994</div><div class="g" style="left:5px;top:221px;width:71px;height:22px">18776</div><div class="g" style="left:80px;top:221px;width:95px;height:22px;text-align:right">1470.00</div><div class="g" style="left:183px;top:221px;width:153px;height:22px">The Clipper Experts</div><div class="g" style="left:341px;top:221px;width:88px;height:22px">1690</div><div class="g" style="left:431px;top:221px;width:93px;height:22px;text-align:right">08/26/1994</div><div class="g" style="left:5px;top:243px;width:71px;height:22px">18790</div><div class="g" style="left:80px;top:243px;width:95px;height:22px;text-align:right">510.00</div><div class="g" style="left:183px;top:243px;width:153px;height:22px">The Clipper Experts</div><div class="g" style="left:341px;top:243px;width:88px;height:22px">1719</div><div class="g" style="left:431px;top:243px;width:93px;height:22px;text-align:right">10/03/1994</div></div><div style="left:1503px;top:128px;width:11px;height:589px;background:#c8c8c8;border-right:1px solid #6d6d6d;border-top:1px solid #6d6d6d"></div><div style="left:1503px;top:129px;width:10px;height:15px;background:#f0f0f0;border-top:1px solid #fff;border-left:1px solid #fff;border-right:1px solid #6d6d6d;border-bottom:1px solid #6d6d6d"></div><svg style="left:1505px;top:134px" width="7" height="4" viewBox="0 0 7 4"><path d="M0 4L3.5 0L7 4Z" fill="#000"/></svg><div style="left:1503px;top:411px;width:10px;height:289px;background:#f4f4f4;border-bottom:1px solid #6d6d6d"></div><div style="left:1503px;top:701px;width:10px;height:16px;background:#f0f0f0;border-top:1px solid #fff;border-left:1px solid #fff;border-right:1px solid #6d6d6d;border-bottom:1px solid #6d6d6d"></div><svg style="left:1505px;top:707px" width="7" height="4" viewBox="0 0 7 4"><path d="M0 0L7 0L3.5 4Z" fill="#000"/></svg><div style="left:960px;top:717px;width:543px;height:13px;background:#c8c8c8;border-top:1px solid #6d6d6d;border-bottom:1px solid #6d6d6d"></div><div style="left:960px;top:718px;width:16px;height:12px;background:#f0f0f0;border-top:1px solid #fff;border-left:1px solid #fff;border-right:1px solid #6d6d6d;border-bottom:1px solid #6d6d6d"></div><svg style="left:965px;top:721px" width="4" height="7" viewBox="0 0 4 7"><path d="M4 0L4 7L0 3.5Z" fill="#000"/></svg><div style="left:976px;top:718px;width:128px;height:12px;background:#f0f0f0;border-left:1px solid #6d6d6d;border-right:1px solid #6d6d6d;border-top:1px solid #fff"></div><div style="left:1486px;top:718px;width:17px;height:12px;background:#f0f0f0;border-top:1px solid #fff;border-left:1px solid #fff;border-right:1px solid #6d6d6d;border-bottom:1px solid #6d6d6d"></div><svg style="left:1492px;top:721px" width="4" height="7" viewBox="0 0 4 7"><path d="M0 0L0 7L4 3.5Z" fill="#000"/></svg><div style="left:1503px;top:717px;width:11px;height:13px;background:#f0f0f0"></div><div class="t" style="left:960px;top:730px;font-size:11px;line-height:13px;color:#000;letter-spacing:-0.38px">Cell Contents:</div><div style="left:960px;top:750px;width:554px;height:78px;background:#fff;border-top:2px solid #6d6d6d;border-left:2px solid #6d6d6d;border-right:1px solid #e8e8e8;border-bottom:1px solid #e8e8e8"></div><div style="left:1497px;top:752px;width:16px;height:75px;background:#f4f4f4"></div><svg style="left:1500px;top:758px" width="11" height="7" viewBox="0 0 11 7"><path d="M1.5 5.5L5.5 1.5L9.5 5.5" stroke="#b8b8b8" stroke-width="1.8" fill="none"/></svg><svg style="left:1500px;top:815px" width="11" height="7" viewBox="0 0 11 7"><path d="M1.5 1.5L5.5 5.5L9.5 1.5" stroke="#b8b8b8" stroke-width="1.8" fill="none"/></svg><div class="m" style="left:963px;top:754px;font-size:13.33px;line-height:12px;color:#111">15393</div><div class="t" style="left:960px;top:830px;font-size:11px;line-height:13px;color:#000;letter-spacing:-0.38px">SQL Statement:</div><div style="left:960px;top:850px;width:449px;height:99px;background:#fff;border-top:2px solid #6d6d6d;border-left:2px solid #6d6d6d;border-right:1px solid #e8e8e8;border-bottom:1px solid #e8e8e8"></div><div style="left:1392px;top:852px;width:16px;height:96px;background:#f4f4f4"></div><svg style="left:1395px;top:858px" width="11" height="7" viewBox="0 0 11 7"><path d="M1.5 5.5L5.5 1.5L9.5 5.5" stroke="#b8b8b8" stroke-width="1.8" fill="none"/></svg><svg style="left:1395px;top:936px" width="11" height="7" viewBox="0 0 11 7"><path d="M1.5 1.5L5.5 5.5L9.5 1.5" stroke="#b8b8b8" stroke-width="1.8" fill="none"/></svg><div class="m" style="left:963px;top:854px;font-size:13.33px;line-height:12px;color:#111">SELECT * from INVOICE WHERE Upper(CUST_NMBR) =</div><div class="m" style="left:963px;top:866px;font-size:13.33px;line-height:12px;color:#111">'41900'</div><div class="btn" style="left:1424px;top:850px;width:68px;height:21px;line-height:20px">Execute</div><div class="btn" style="left:1424px;top:872px;width:68px;height:21px;line-height:20px">Reset</div><div class="btn" style="left:1424px;top:894px;width:68px;height:21px;line-height:20px">Objects</div><div class="btn" style="left:1424px;top:916px;width:68px;height:21px;line-height:20px">Save</div>
</body></html>
